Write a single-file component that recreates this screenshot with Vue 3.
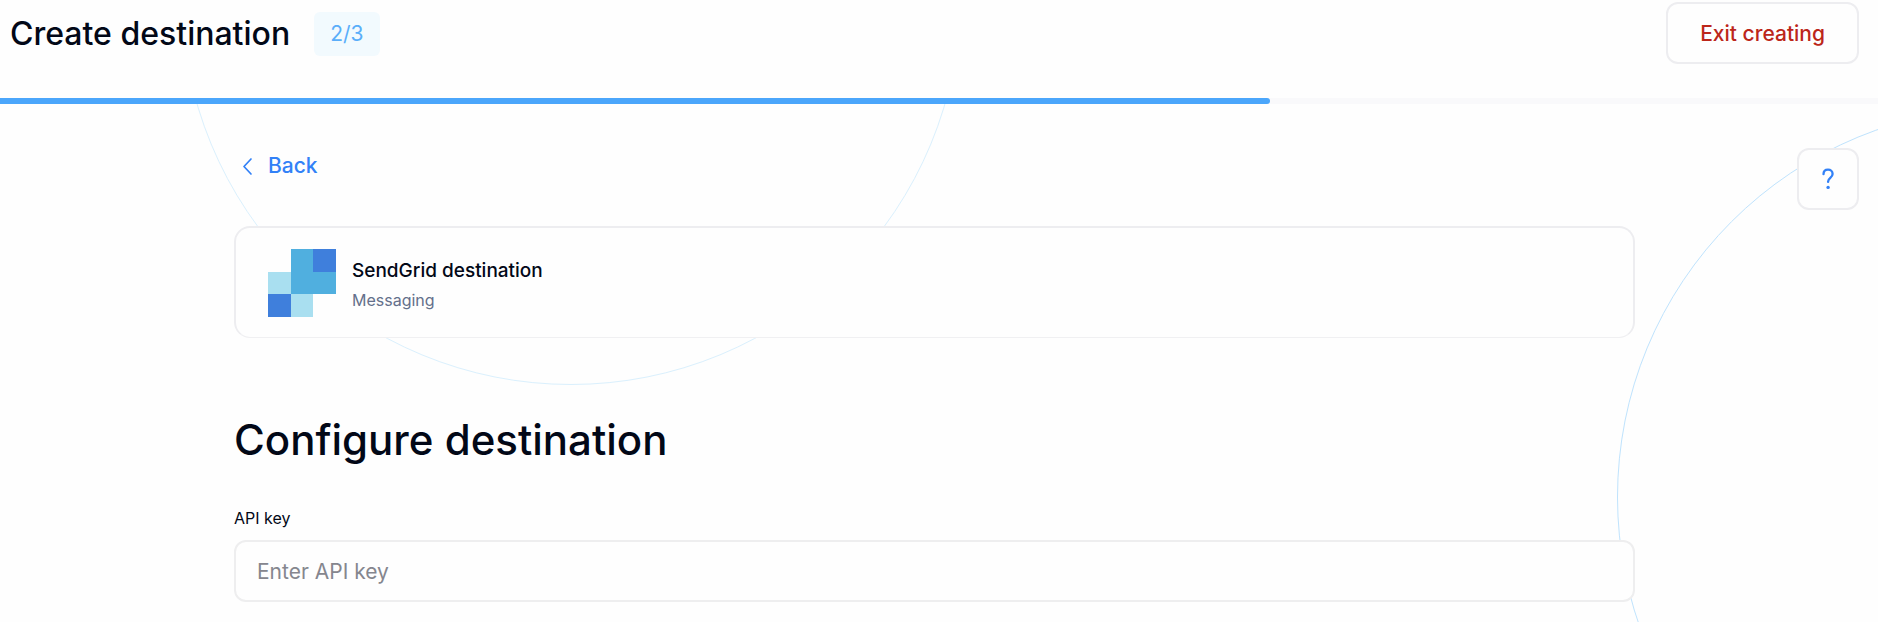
<script setup>
import { ref } from 'vue'

const step = 2
const total = 3
const progress = 67.6
const apiKey = ref('')
</script>

<template>
  <div class="page">
    <header class="header">
      <div class="heading">
        <h1 class="title">Create destination</h1>
        <span class="badge">{{ step }}/{{ total }}</span>
      </div>
      <button type="button" class="btn exit">Exit creating</button>
    </header>

    <div class="track" role="progressbar" aria-label="Progress" :aria-valuenow="step" aria-valuemin="0" :aria-valuemax="total">
      <div class="fill" :style="{ width: progress + '%' }"></div>
    </div>

    <div class="stage">
      <div class="ring ring-left"></div>
      <div class="ring ring-right"></div>

      <main class="content">
        <a href="#" class="back">
          <svg class="chevron" viewBox="0 0 26 24" fill="none" aria-hidden="true">
            <path d="M17 5 10 12.500 17 20" stroke="currentColor" stroke-width="1.700" stroke-linecap="round" stroke-linejoin="round" />
          </svg>
          Back
        </a>

        <section class="card">
          <svg class="logo" viewBox="0 0 68 68" shape-rendering="crispEdges" aria-hidden="true">
            <path fill="#a9dff0" d="M0 23h23v22H0zM23 45h22v23H23z" />
            <path fill="#3f7fdc" d="M0 45h23v23H0zM45 0h23v23H45z" />
            <path fill="#50afdf" d="M23 0h22v23h23v22H23z" />
          </svg>
          <div class="info">
            <div class="name">SendGrid destination</div>
            <div class="kind">Messaging</div>
          </div>
        </section>

        <h2 class="subtitle">Configure destination</h2>

        <label class="label" for="api-key">API key</label>
        <input id="api-key" v-model="apiKey" class="input" type="text" placeholder="Enter API key" />
      </main>

      <button type="button" class="btn help" aria-label="Help">
        <svg class="question" viewBox="0 0 24 24" fill="none" aria-hidden="true">
          <path d="M7.500 7.200C7.500 4.400 9.400 2.600 12 2.600s4.600 1.700 4.600 4.300c0 3.800-4.500 3.900-4.500 7.500v.5" stroke="currentColor" stroke-width="2.300" stroke-linecap="round" />
          <circle cx="12.100" cy="20.400" r="1.700" fill="currentColor" />
        </svg>
      </button>
    </div>
  </div>
</template>

<style>
body {
  margin: 0;
  background: #fefefe;
}
</style>

<style scoped>
.page {
  display: flex;
  flex-direction: column;
  height: 100vh;
  overflow: hidden;
  color: #020817;
  font-family: Inter, "Liberation Sans", sans-serif;
}

.page * {
  box-sizing: border-box;
}

.header {
  display: flex;
  align-items: flex-start;
  justify-content: space-between;
  height: 98px;
  padding: 2px 19px 0 10px;
}

.heading {
  display: flex;
  align-items: center;
  gap: 24px;
  height: 64px;
}

.title {
  margin: 0;
  font-size: 32px;
  font-weight: 500;
  line-height: 40px;
}

.badge {
  padding: 0 16px;
  border-radius: 6px;
  background: #f2fafe;
  color: #5aaefa;
  font-size: 21px;
  line-height: 44px;
}

.btn {
  height: 62px;
  border: 2px solid #ededf0;
  border-radius: 12px;
  background: #fefefe;
  font-family: inherit;
  cursor: pointer;
}

.exit {
  padding: 0 32px;
  color: #bc261a;
  font-size: 21px;
  font-weight: 500;
}

.track {
  flex: none;
  height: 6px;
  background: #f9f9fb;
}

.fill {
  height: 6px;
  border-radius: 0 3px 3px 0;
  background: #4ba6fb;
}

.stage {
  position: relative;
  flex: 1;
  overflow: hidden;
  padding: 40px 243px 0 234px;
}

.ring {
  position: absolute;
  width: 780px;
  height: 780px;
  border: 1px solid #daf0fd;
  border-radius: 50%;
}

.ring-left {
  top: -499px;
  left: 181px;
}

.ring-right {
  top: 3px;
  right: -519px;
  border-color: #bfe3fd;
}

.content {
  position: relative;
}

.back {
  display: inline-flex;
  align-items: center;
  gap: 8px;
  color: #3281f7;
  font-size: 21px;
  font-weight: 500;
  line-height: 44px;
  text-decoration: none;
}

.chevron {
  width: 26px;
  height: 24px;
}

.card {
  display: flex;
  align-items: center;
  gap: 16px;
  height: 112px;
  margin-top: 38px;
  padding: 0 32px;
  border: 2px solid #ededf0;
  border-bottom: 1px solid #f0f0f2;
  border-radius: 16px;
  background: #fefefe;
}

.logo {
  width: 68px;
  height: 68px;
}

.info {
  padding-top: 4px;
}

.name {
  font-size: 19px;
  font-weight: 500;
  line-height: 30px;
}

.kind {
  color: #64708b;
  font-size: 16px;
  line-height: 28px;
}

.subtitle {
  margin: 72px 0 0;
  font-size: 42px;
  font-weight: 500;
  line-height: 60px;
}

.label {
  display: block;
  margin-top: 36px;
  font-size: 16px;
  line-height: 24px;
}

.input {
  display: block;
  width: 100%;
  height: 62px;
  margin-top: 10px;
  padding: 0 21px;
  border: 2px solid #eeeeef;
  border-radius: 12px;
  background: #fefefe;
  color: inherit;
  font-family: inherit;
  font-size: 21px;
}

.input::placeholder {
  color: #85868e;
  opacity: 1;
}

.help {
  position: absolute;
  top: 44px;
  right: 19px;
  display: grid;
  place-items: center;
  width: 62px;
  padding: 0;
  color: #3281f7;
}

.question {
  width: 24px;
  height: 24px;
}
</style>
